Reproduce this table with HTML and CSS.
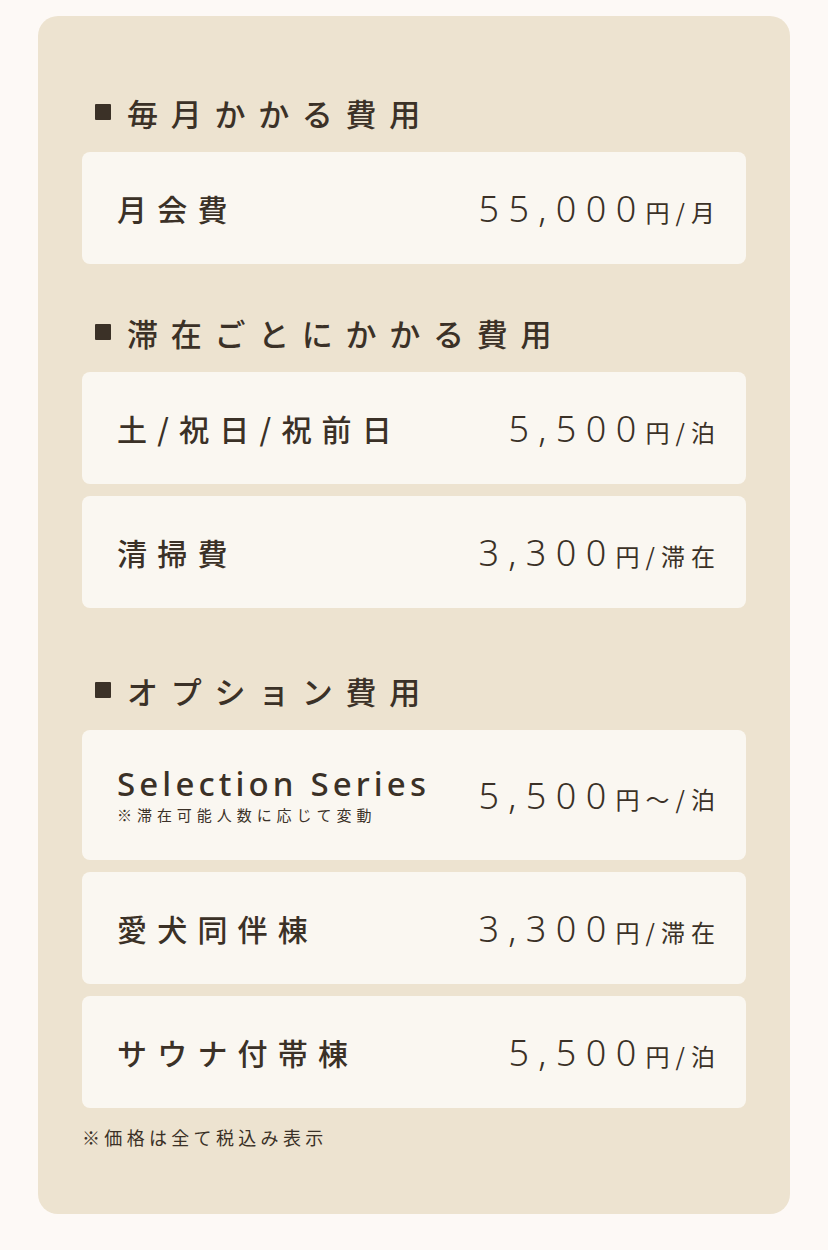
FILE: index.html
```html
<!DOCTYPE html>
<html lang="ja">
<head>
<meta charset="utf-8">
<title>料金</title>
<link rel="stylesheet" href="styles.css">
</head>
<body>
<div class="panel">
  <section class="section">
    <h2 class="heading"><span class="mark"></span>毎月かかる費用</h2>
    <div class="cards">
      <div class="card">
        <div class="label">月会費</div>
        <div class="price"><span class="num">55,000</span><span class="unit">円/月</span></div>
      </div>
    </div>
  </section>
  <section class="section s2">
    <h2 class="heading"><span class="mark"></span>滞在ごとにかかる費用</h2>
    <div class="cards">
      <div class="card">
        <div class="label">土/祝日/祝前日</div>
        <div class="price"><span class="num">5,500</span><span class="unit">円/泊</span></div>
      </div>
      <div class="card">
        <div class="label">清掃費</div>
        <div class="price"><span class="num">3,300</span><span class="unit">円/滞在</span></div>
      </div>
    </div>
  </section>
  <section class="section s3">
    <h2 class="heading"><span class="mark"></span>オプション費用</h2>
    <div class="cards">
      <div class="card tall">
        <div class="label-group">
          <div class="label latin">Selection Series</div>
          <div class="sub">※滞在可能人数に応じて変動</div>
        </div>
        <div class="price"><span class="num">5,500</span><span class="unit">円～/泊</span></div>
      </div>
      <div class="card">
        <div class="label">愛犬同伴棟</div>
        <div class="price"><span class="num">3,300</span><span class="unit">円/滞在</span></div>
      </div>
      <div class="card">
        <div class="label">サウナ付帯棟</div>
        <div class="price"><span class="num">5,500</span><span class="unit">円/泊</span></div>
      </div>
    </div>
  </section>
  <p class="note">※価格は全て税込み表示</p>
</div>
</body>
</html>
```

FILE: styles.css
```css
* { box-sizing: border-box; }
html, body { margin: 0; padding: 0; }
body {
  background: #fdf9f6;
  color: #3b3127;
  font-family: "Noto Sans", "Noto Sans CJK JP", sans-serif;
  padding: 16px 38px 36px;
}
.panel {
  background: #ede3d0;
  border-radius: 20px;
  padding: 76px 44px 64px;
}
.section { display: flex; flex-direction: column; }
.s2 { margin-top: 48px; }
.s3 { margin-top: 62px; }
.heading {
  margin: 0 0 20px;
  display: flex;
  align-items: center;
  height: 40px;
  font-size: 31px;
  font-weight: 500;
  letter-spacing: 0.41em;
  font-family: "Noto Sans CJK JP", sans-serif;
  padding-left: 13px;
}
.mark {
  width: 16px;
  height: 16px;
  background: #3b3127;
  border-radius: 1px;
  margin-right: 16px;
  flex: none;
}
.cards { display: flex; flex-direction: column; gap: 12px; }
.card {
  background: #faf7f1;
  border-radius: 8px;
  min-height: 112px;
  display: flex;
  align-items: center;
  justify-content: space-between;
  padding: 0 25px 0 35px;
}
.card.tall { min-height: 130px; }
.label {
  font-family: "Noto Sans CJK JP", sans-serif;
  font-size: 30px;
  font-weight: 500;
  letter-spacing: 0.34em;
  line-height: 40px;
}
.label.latin {
  font-family: "Noto Sans", sans-serif;
  font-size: 33px;
  letter-spacing: 0.125em;
  line-height: 38px;
}
.sub {
  font-family: "Noto Sans CJK JP", sans-serif;
  font-size: 15px;
  letter-spacing: 0.33em;
  line-height: 20px;
  margin-top: 2px;
}
.price {
  display: flex;
  align-items: baseline;
  white-space: nowrap;
}
.num {
  font-family: "Noto Sans", sans-serif;
  font-size: 36px;
  letter-spacing: 0.26em;
  font-weight: 300;
}
.unit {
  font-family: "Noto Sans CJK JP", sans-serif;
  font-size: 24px;
  letter-spacing: 0.25em;
}
.note {
  margin: 16px 0 0;
  font-family: "Noto Sans CJK JP", sans-serif;
  font-size: 18px;
  letter-spacing: 0.24em;
  line-height: 26px;
}
```
